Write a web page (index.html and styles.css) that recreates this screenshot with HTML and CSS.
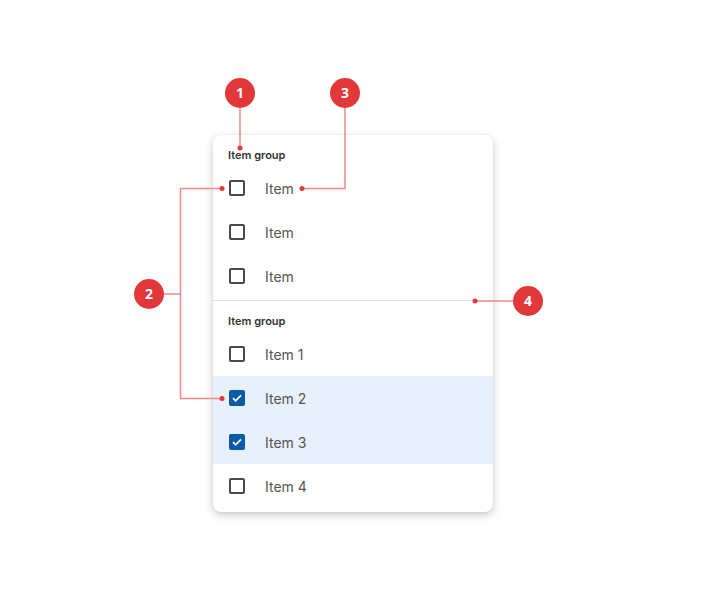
FILE: index.html
```html
<!DOCTYPE html>
<html lang="en">

<head>
  <meta charset="UTF-8">
  <meta name="viewport" content="width=device-width, initial-scale=1.0">
  <title>Checkbox menu</title>
  <link rel="stylesheet" href="styles.css">
</head>

<body>
  <div class="stage">
    <!-- Menu -->
    <div class="menu">
      <div class="group">
        <div class="group-title">Item group</div>
        <div class="item"><span class="box"></span><span class="label">Item</span></div>
        <div class="item"><span class="box"></span><span class="label">Item</span></div>
        <div class="item"><span class="box"></span><span class="label">Item</span></div>
      </div>
      <div class="group">
        <div class="group-title">Item group</div>
        <div class="item"><span class="box"></span><span class="label">Item 1</span></div>
        <div class="item selected">
          <span class="box checked">
            <svg viewBox="0 0 16 16" width="16" height="16"><path d="M4 8.2l2.6 2.6L12 5.4" fill="none" stroke="#fff" stroke-width="1.8"/></svg>
          </span>
          <span class="label">Item 2</span>
        </div>
        <div class="item selected">
          <span class="box checked">
            <svg viewBox="0 0 16 16" width="16" height="16"><path d="M4 8.2l2.6 2.6L12 5.4" fill="none" stroke="#fff" stroke-width="1.8"/></svg>
          </span>
          <span class="label">Item 3</span>
        </div>
        <div class="item"><span class="box"></span><span class="label">Item 4</span></div>
      </div>
    </div>

    <!-- Annotations -->
    <svg class="notes" width="705" height="612" viewBox="0 0 705 612">
      <g stroke="#ee8b8b" stroke-width="1.5" fill="none">
        <path d="M240 108V148"/>
        <path d="M345 108V188.5H302"/>
        <path d="M164 294H180.5M180.5 188V398.5M180 188.5H222M180 398.5H222"/>
        <path d="M475 301H513"/>
      </g>
      <g fill="#e2383a">
        <circle cx="240" cy="148" r="2.5"/>
        <circle cx="302" cy="188.5" r="2.5"/>
        <circle cx="222" cy="188.5" r="2.5"/>
        <circle cx="222" cy="398.5" r="2.5"/>
        <circle cx="475" cy="301" r="2.5"/>
        <circle cx="240" cy="93" r="15"/>
        <circle cx="345" cy="93" r="15"/>
        <circle cx="149" cy="294" r="15"/>
        <circle cx="528" cy="301" r="15"/>
      </g>
      <g class="num" fill="#fff" text-anchor="middle">
        <text x="240" y="98">1</text>
        <text x="345" y="98">3</text>
        <text x="149" y="299">2</text>
        <text x="528" y="306">4</text>
      </g>
    </svg>
  </div>
</body>

</html>
```

FILE: styles.css
```css
* {
  box-sizing: border-box;
  margin: 0;
  padding: 0;
}

body {
  background: #fff;
  font-family: Inter, "Noto Sans", sans-serif;
  color: #333;
}

.stage {
  position: relative;
  width: 705px;
  height: 612px;
  padding: 135px 0 0 213px;
}

.menu {
  width: 280px;
  background: #fff;
  border-radius: 8px;
  padding-bottom: 4px;
  box-shadow: 0 3px 8px rgba(0, 0, 0, 0.22), 0 0 2px rgba(0, 0, 0, 0.06);
  overflow: hidden;
}

.group:first-child {
  padding-bottom: 2px;
}

.group + .group {
  border-top: 1px solid #e4e4e4;
}

.group-title {
  height: 31px;
  padding: 13px 0 0 15px;
  font-size: 11px;
  line-height: 14px;
  font-weight: 600;
  color: #333;
}

.item {
  display: flex;
  align-items: center;
  height: 44px;
  padding-left: 16px;
}

.item.selected {
  background: #e8f0fc;
}

.box {
  width: 16px;
  height: 16px;
  border: 2px solid #4a4a4a;
  border-radius: 2px;
  flex-shrink: 0;
}

.box.checked {
  border: none;
  background: #0b5aa5;
  display: flex;
}

.label {
  margin-left: 20px;
  font-size: 14px;
  color: #555;
}

.notes {
  position: absolute;
  left: 0;
  top: 0;
}

.num {
  font-family: "Open Sans", sans-serif;
  font-size: 14px;
  font-weight: 700;
}
```
